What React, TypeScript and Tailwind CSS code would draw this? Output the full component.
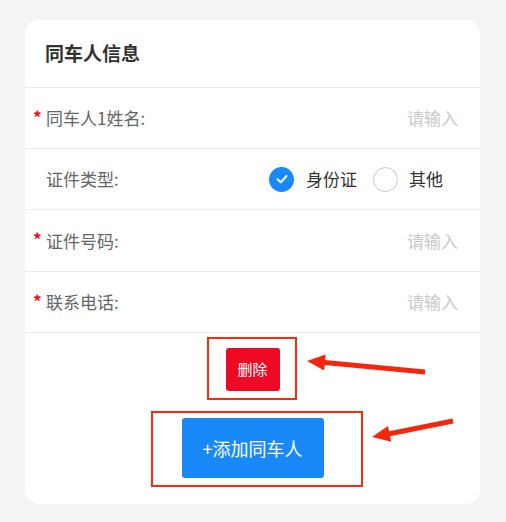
import React from 'react';

const font = { fontFamily: '"Noto Sans CJK SC", "Noto Sans", sans-serif' };

const Field: React.FC<{ label: string; required?: boolean; h?: string }> = ({ label, required, h = 'h-[61px]' }) => (
  <div className={`${h} flex items-center border-b border-[#ebedf0] pl-2 pr-[22px]`}>
    <span className="w-[13px] text-[#ee0a24] text-[17px] font-bold leading-none -translate-y-[2px]">{required ? '*' : ''}</span>
    <span className="text-[17px] text-[#646566]">{label}</span>
    <span className="ml-auto text-[17px] text-[#c8c9cc]">请输入</span>
  </div>
);

export default function App() {
  return (
    <div className="relative w-[506px] h-[522px] bg-[#f4f4f4] pt-5 px-[25px] overflow-hidden" style={font}>
      <div className="bg-white rounded-[14px] w-[455px]">
        {/* header */}
        <div className="h-[68px] flex items-center pl-5 border-b border-[#ebedf0]">
          <span className="text-[19px] font-bold text-[#323233]">同车人信息</span>
        </div>

        <Field label="同车人1姓名:" required />

        {/* id type */}
        <div className="h-[61px] flex items-center border-b border-[#ebedf0] pl-2 pr-[37px]">
          <span className="w-[13px]" />
          <span className="text-[17px] text-[#646566]">证件类型:</span>
          <div className="ml-auto flex items-center">
            <span className="w-[25px] h-[25px] rounded-full bg-[#1989fa] flex items-center justify-center">
              <svg width="14" height="14" viewBox="0 0 14 14" fill="none">
                <path d="M2.5 7.2 L5.8 10.3 L11.5 4" stroke="white" strokeWidth="2" strokeLinecap="round" strokeLinejoin="round" />
              </svg>
            </span>
            <span className="ml-3 text-[17px] text-[#323233]">身份证</span>
            <span className="ml-4 w-[25px] h-[25px] rounded-full border border-[#c8c9cc]" />
            <span className="ml-[11px] text-[17px] text-[#323233]">其他</span>
          </div>
        </div>

        <Field label="证件号码:" required h="h-[62px]" />
        <Field label="联系电话:" required />

        {/* actions */}
        <div className="flex flex-col items-center pt-[15px] pb-[26px]">
          <button className="w-[54px] h-[43px] rounded-[3px] bg-[#ee0a24] text-white text-[15px]">删除</button>
          <button className="mt-[27px] w-[142px] h-[60px] rounded-[3px] bg-[#1989fa] text-white text-[18px]">+添加同车人</button>
        </div>
      </div>

      {/* annotations */}
      <div className="absolute left-[207px] top-[337px] w-[90px] h-[63px] border-2 border-[#fa2a0e]" />
      <div className="absolute left-[151px] top-[411px] w-[212px] h-[76px] border-2 border-[#fa2a0e]" />
      <svg className="absolute inset-0 pointer-events-none" width="506" height="522">
        <line x1="322" y1="362.3" x2="425" y2="372" stroke="#f5260e" strokeWidth="5" />
        <polygon points="307,361 324.2,370.5 325.6,354.5" fill="#f5260e" />
        <line x1="387" y1="434.2" x2="453" y2="421" stroke="#f5260e" strokeWidth="5" />
        <polygon points="372,437 391.2,441.8 388,426" fill="#f5260e" />
      </svg>
    </div>
  );
}
